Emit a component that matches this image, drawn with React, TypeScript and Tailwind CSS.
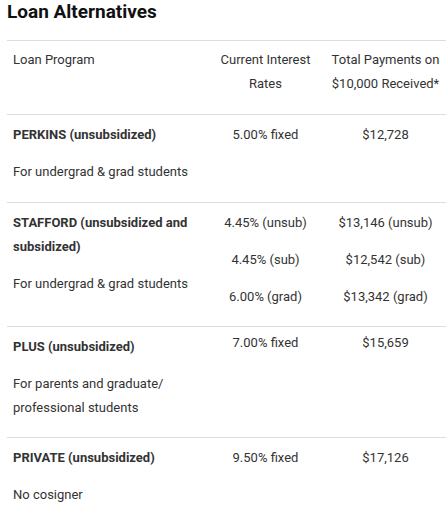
const rows = [
  {
    name: 'PERKINS (unsubsidized)',
    desc: ['For undergrad & grad students'],
    rates: ['5.00% fixed'],
    totals: ['$12,728'],
    shift: false,
    pb: 'pb-[5px]',
  },
  {
    name: 'STAFFORD (unsubsidized and subsidized)',
    desc: ['For undergrad & grad students'],
    rates: ['4.45% (unsub)', '4.45% (sub)', '6.00% (grad)'],
    totals: ['$13,146 (unsub)', '$12,542 (sub)', '$13,342 (grad)'],
    shift: false,
    pb: 'pb-[4px]',
  },
  {
    name: 'PLUS (unsubsidized)',
    desc: ['For parents and graduate/ professional students'],
    rates: ['7.00% fixed'],
    totals: ['$15,659'],
    shift: true,
    pb: 'pb-[4px]',
  },
  {
    name: 'PRIVATE (unsubsidized)',
    desc: ['No cosigner'],
    rates: ['9.50% fixed'],
    totals: ['$17,126'],
    shift: false,
    pb: 'pb-[5px]',
  },
];

export default function App() {
  return (
    <div className="bg-white w-[446px] h-[516px] overflow-hidden pl-[7px] text-[#333] font-['Roboto',sans-serif]">
      <h2 className="text-[19px] leading-[24px] font-bold text-[#111]">Loan Alternatives</h2>

      <table className="mt-[16px] w-[440px] border-collapse text-[13px] leading-[24px] table-fixed">
        <colgroup>
          <col className="w-[200px]" />
          <col className="w-[117px]" />
          <col className="w-[123px]" />
        </colgroup>
        <thead>
          <tr className="border-t border-[#ddd]">
            <th className="text-left font-normal align-top pl-[6px] pt-[7px] pb-[18px]">Loan Program</th>
            <th className="font-normal align-top pt-[7px] pb-[18px]">Current Interest Rates</th>
            <th className="font-normal align-top pt-[7px] pb-[18px]">Total Payments on $10,000 Received*</th>
          </tr>
        </thead>
        <tbody>
          {rows.map((r) => (
            <tr key={r.name} className="border-t border-[#ddd]">
              <td className={`align-top pl-[6px] pr-[4px] pt-[8px] ${r.pb}`}>
                <p className="font-bold mb-[13px]">{r.name}</p>
                {r.desc.map((d) => (
                  <p key={d} className="mb-[13px]">{d}</p>
                ))}
              </td>
              <td className={`align-top text-center ${r.pb} ${r.shift ? 'pt-[4px]' : 'pt-[8px]'}`}>
                {r.rates.map((x) => (
                  <p key={x} className="mb-[13px]">{x}</p>
                ))}
              </td>
              <td className={`align-top text-center ${r.pb} ${r.shift ? 'pt-[4px]' : 'pt-[8px]'}`}>
                {r.totals.map((x) => (
                  <p key={x} className="mb-[13px]">{x}</p>
                ))}
              </td>
            </tr>
          ))}
        </tbody>
      </table>
    </div>
  );
}
